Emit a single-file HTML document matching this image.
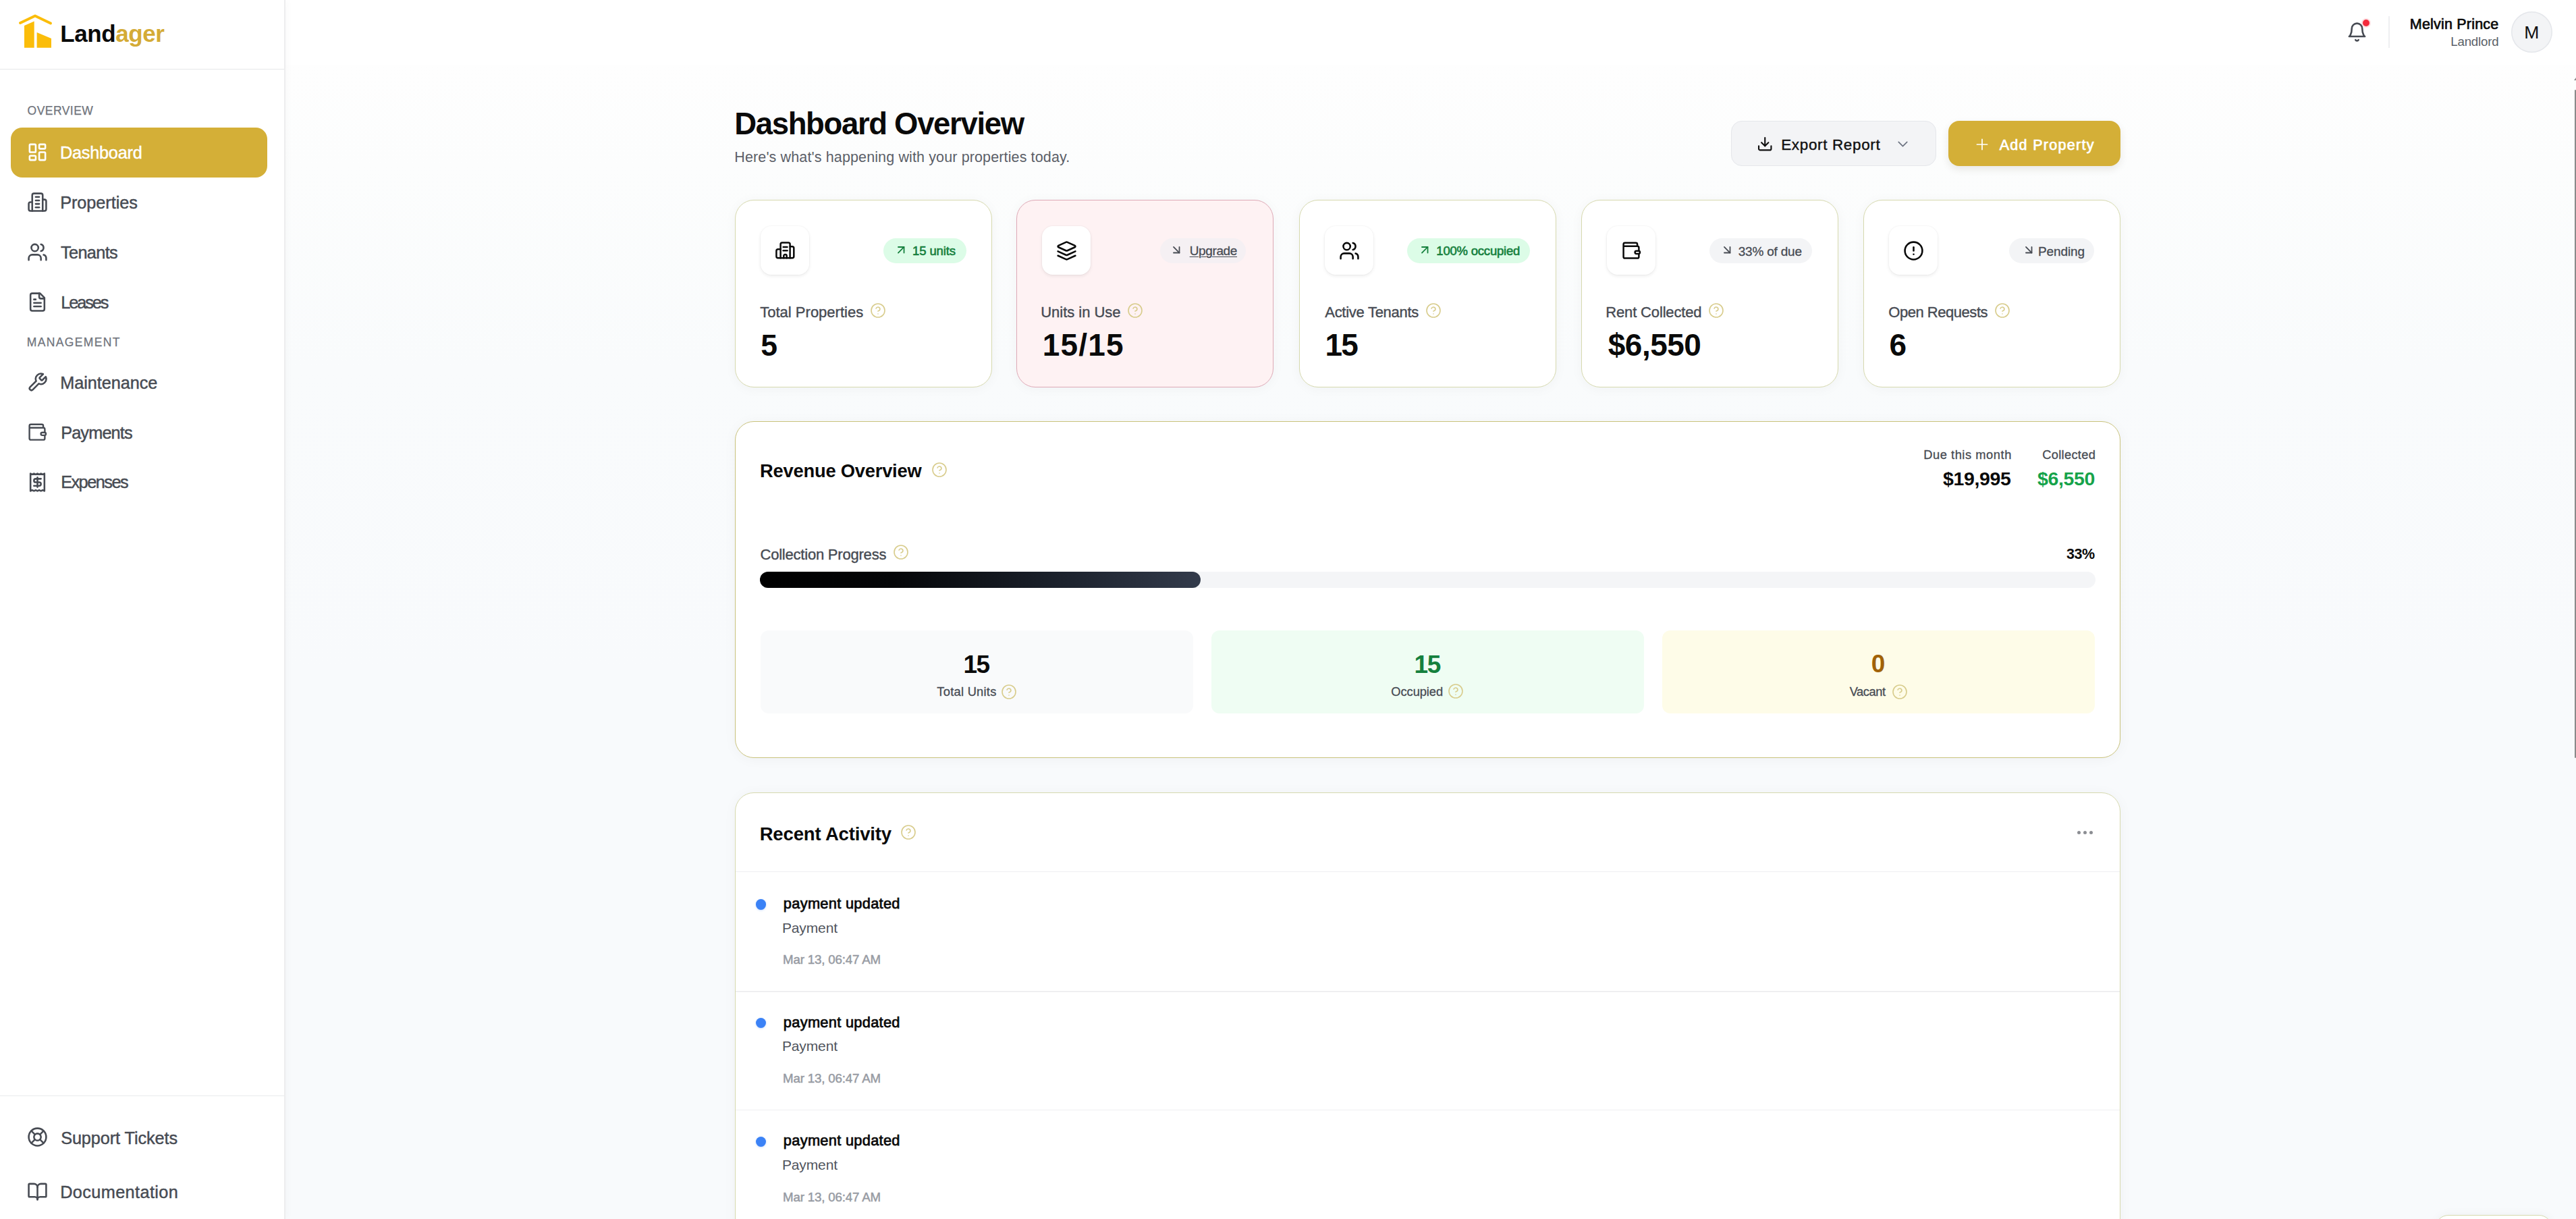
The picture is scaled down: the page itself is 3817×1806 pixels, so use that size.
<!DOCTYPE html>
<html><head><meta charset="utf-8"><title>Landager Dashboard</title>
<style>
html,body{margin:0;padding:0;width:3817px;height:1806px;overflow:hidden;}
body{position:relative;font-family:"Liberation Sans",sans-serif;background:#f9fafb;}
.t{position:absolute;white-space:nowrap;}
</style></head><body>
<div style="position:absolute;left:421px;top:96px;width:3396px;height:1710px;background:linear-gradient(180deg,#fefefe 0px,#fcfdfd 150px,#f9fbfc 450px,#f8fafc 900px,#f8fafc 1710px)"></div>
<div style="position:absolute;left:421px;top:0px;width:3396px;height:96px;background:#ffffff"></div>
<div style="position:absolute;left:0px;top:0px;width:421px;height:1806px;background:#ffffff;border-right:2px solid #ededee;box-shadow:3px 0 10px rgba(0,0,0,0.025)"></div>
<div style="position:absolute;left:0px;top:101.5px;width:421px;height:1px;background:#e6e7e9"></div>
<div style="position:absolute;left:0px;top:1623px;width:421px;height:1px;background:#e9eaec"></div>
<svg style="position:absolute;left:0;top:0" width="100" height="100" viewBox="0 0 100 100"><polyline points="30,34 52,23.5 75,34.5" fill="none" stroke="#fbbd0a" stroke-width="4" stroke-linecap="round" stroke-linejoin="round"/><path d="M36 38 L50.7 31.6 L50.7 70.7 L36 70.7 Z" fill="#fbbd0a"/><path d="M54.6 48 L76 57 L76 70.7 L54.6 70.7 Z" fill="#fbbd0a"/></svg>
<div class="t" style="top:32.37px;font-size:35px;line-height:35px;color:#0a0a0a;font-weight:700;letter-spacing:-0.427px;left:89.35px;">Land<span style="color:#d4ab36">ager</span></div>
<div class="t" style="top:156.19px;font-size:17.5px;line-height:17.5px;color:#70747c;-webkit-text-stroke:0.25px #70747c;letter-spacing:0.463px;left:40.58px;">OVERVIEW</div>
<div style="position:absolute;left:16px;top:189px;width:380px;height:74px;background:#d4af37;border-radius:17px"></div>
<svg style="position:absolute;left:39.5px;top:209.5px;" width="31" height="31" viewBox="0 0 24 24" fill="none" stroke="#ffffff" stroke-width="2" stroke-linecap="round" stroke-linejoin="round"><rect width="7" height="9" x="3" y="3" rx="1"/><rect width="7" height="5" x="14" y="3" rx="1"/><rect width="7" height="9" x="14" y="12" rx="1"/><rect width="7" height="5" x="3" y="16" rx="1"/></svg>
<div class="t" style="top:213.58px;font-size:25.3px;line-height:25.3px;color:#ffffff;-webkit-text-stroke:0.45px #ffffff;letter-spacing:-0.257px;left:89.03px;">Dashboard</div>
<svg style="position:absolute;left:39.5px;top:283.7px;" width="31" height="31" viewBox="0 0 24 24" fill="none" stroke="#474b53" stroke-width="2" stroke-linecap="round" stroke-linejoin="round"><path d="M6 22V4a2 2 0 0 1 2-2h8a2 2 0 0 1 2 2v18Z"/><path d="M6 12H4a2 2 0 0 0-2 2v6a2 2 0 0 0 2 2h2"/><path d="M18 9h2a2 2 0 0 1 2 2v9a2 2 0 0 1-2 2h-2"/><path d="M10 6h4"/><path d="M10 10h4"/><path d="M10 14h4"/><path d="M10 18h4"/></svg>
<div class="t" style="top:288.10px;font-size:25.3px;line-height:25.3px;color:#474b53;-webkit-text-stroke:0.45px #474b53;letter-spacing:-0.060px;left:89.13px;">Properties</div>
<svg style="position:absolute;left:39.5px;top:357.7px;" width="31" height="31" viewBox="0 0 24 24" fill="none" stroke="#474b53" stroke-width="2" stroke-linecap="round" stroke-linejoin="round"><path d="M16 21v-2a4 4 0 0 0-4-4H6a4 4 0 0 0-4 4v2"/><circle cx="9" cy="7" r="4"/><path d="M22 21v-2a4 4 0 0 0-3-3.87"/><path d="M16 3.13a4 4 0 0 1 0 7.75"/></svg>
<div class="t" style="top:362.10px;font-size:25.3px;line-height:25.3px;color:#474b53;-webkit-text-stroke:0.45px #474b53;letter-spacing:-0.630px;left:89.93px;">Tenants</div>
<svg style="position:absolute;left:39.5px;top:431.8px;" width="31" height="31" viewBox="0 0 24 24" fill="none" stroke="#474b53" stroke-width="2" stroke-linecap="round" stroke-linejoin="round"><path d="M15 2H6a2 2 0 0 0-2 2v16a2 2 0 0 0 2 2h12a2 2 0 0 0 2-2V7Z"/><path d="M14 2v4a2 2 0 0 0 2 2h4"/><path d="M10 9H8"/><path d="M16 13H8"/><path d="M16 17H8"/></svg>
<div class="t" style="top:436.36px;font-size:25.3px;line-height:25.3px;color:#474b53;-webkit-text-stroke:0.45px #474b53;letter-spacing:-2.052px;left:90.13px;">Leases</div>
<div class="t" style="top:498.75px;font-size:17.5px;line-height:17.5px;color:#70747c;-webkit-text-stroke:0.25px #70747c;letter-spacing:1.370px;left:39.77px;">MANAGEMENT</div>
<svg style="position:absolute;left:39.5px;top:551.1px;" width="31" height="31" viewBox="0 0 24 24" fill="none" stroke="#474b53" stroke-width="2" stroke-linecap="round" stroke-linejoin="round"><path d="M14.7 6.3a1 1 0 0 0 0 1.4l1.6 1.6a1 1 0 0 0 1.4 0l3.77-3.77a6 6 0 0 1-7.94 7.94l-6.91 6.91a2.12 2.12 0 0 1-3-3l6.91-6.91a6 6 0 0 1 7.94-7.94l-3.76 3.76z"/></svg>
<div class="t" style="top:555.34px;font-size:25.3px;line-height:25.3px;color:#474b53;-webkit-text-stroke:0.45px #474b53;letter-spacing:-0.054px;left:89.13px;">Maintenance</div>
<svg style="position:absolute;left:32.7px;top:619.0999999999999px" width="40" height="40" viewBox="0 0 40 40" fill="none" stroke="#474b53" stroke-width="2.4" stroke-linecap="round" stroke-linejoin="round"><path d="M31.1 14.8V11.9a2.2 2.2 0 0 0-2.2-2.2H12.8a2.2 2.2 0 0 0-2.2 2.2V30.4a2.2 2.2 0 0 0 2.2 2.2H31.2a2.2 2.2 0 0 0 2.2-2.2V17a2.2 2.2 0 0 0-2.2-2.2H10.6"/><rect x="27.6" y="21.7" width="7.4" height="4.2" rx="2.1" fill="#ffffff"/></svg>
<div class="t" style="top:629.36px;font-size:25.3px;line-height:25.3px;color:#474b53;-webkit-text-stroke:0.45px #474b53;letter-spacing:-0.849px;left:90.13px;">Payments</div>
<svg style="position:absolute;left:39.5px;top:698.7px;" width="31" height="31" viewBox="0 0 24 24" fill="none" stroke="#474b53" stroke-width="2" stroke-linecap="round" stroke-linejoin="round"><path d="M4 2v20l2-1 2 1 2-1 2 1 2-1 2 1 2-1 2 1V2l-2 1-2-1-2 1-2-1-2 1-2-1-2 1Z"/><path d="M16 8h-6a2 2 0 1 0 0 4h4a2 2 0 1 1 0 4H8"/><path d="M12 17.5v-11"/></svg>
<div class="t" style="top:702.30px;font-size:25.3px;line-height:25.3px;color:#474b53;-webkit-text-stroke:0.45px #474b53;letter-spacing:-1.519px;left:90.13px;">Expenses</div>
<svg style="position:absolute;left:39.5px;top:1669.4px;" width="31" height="31" viewBox="0 0 24 24" fill="none" stroke="#474b53" stroke-width="2" stroke-linecap="round" stroke-linejoin="round"><circle cx="12" cy="12" r="10"/><path d="m4.93 4.93 4.24 4.24"/><path d="m14.83 9.17 4.24-4.24"/><path d="m14.83 14.83 4.24 4.24"/><path d="m9.17 14.83-4.24 4.24"/><circle cx="12" cy="12" r="4"/></svg>
<div class="t" style="top:1674.12px;font-size:25.3px;line-height:25.3px;color:#474b53;-webkit-text-stroke:0.45px #474b53;letter-spacing:-0.099px;left:90.13px;">Support Tickets</div>
<svg style="position:absolute;left:39.5px;top:1749.5px;" width="31" height="31" viewBox="0 0 24 24" fill="none" stroke="#474b53" stroke-width="2" stroke-linecap="round" stroke-linejoin="round"><path d="M12 7v14"/><path d="M3 18a1 1 0 0 1-1-1V4a1 1 0 0 1 1-1h5a4 4 0 0 1 4 4 4 4 0 0 1 4-4h5a1 1 0 0 1 1 1v13a1 1 0 0 1-1 1h-6a3 3 0 0 0-3 3 3 3 0 0 0-3-3z"/></svg>
<div class="t" style="top:1753.58px;font-size:25.3px;line-height:25.3px;color:#474b53;-webkit-text-stroke:0.45px #474b53;letter-spacing:0.379px;left:89.13px;">Documentation</div>
<svg style="position:absolute;left:3477px;top:32px;" width="31" height="31" viewBox="0 0 24 24" fill="none" stroke="#474b53" stroke-width="2" stroke-linecap="round" stroke-linejoin="round"><path d="M6 8a6 6 0 0 1 12 0c0 7 3 9 3 9H3s3-2 3-9"/><path d="M10.3 21a1.94 1.94 0 0 0 3.4 0"/></svg>
<div style="position:absolute;left:3501.1px;top:28.5px;width:10px;height:10px;background:#f42a3c;border-radius:50%;box-shadow:0 0 0 2px rgba(244,42,60,0.15)"></div>
<div style="position:absolute;left:3539px;top:24px;width:1.5px;height:47px;background:#eeeff1"></div>
<div class="t" style="top:26.08px;font-size:21.5px;line-height:21.5px;color:#0a0a0a;-webkit-text-stroke:0.7px #0a0a0a;letter-spacing:0.200px;right:114.54px;">Melvin Prince</div>
<div class="t" style="top:53.11px;font-size:18.7px;line-height:18.7px;color:#5b5f68;letter-spacing:-0.165px;right:114.42px;">Landlord</div>
<div style="position:absolute;left:3721px;top:17px;width:61px;height:61px;background:#f3f4f6;border-radius:50%;box-shadow:inset 0 0 0 1.5px #e5e7eb"></div>
<div class="t" style="top:34.85px;font-size:26.5px;line-height:26.5px;color:#111111;left:3740.14px;">M</div>
<div style="position:absolute;left:3814.6px;top:133px;width:2.4px;height:990px;background:#8a8a8a;border-radius:1.2px"></div>
<svg style="position:absolute;left:3812px;top:113px" width="6" height="8" viewBox="0 0 6 8"><path d="M2 6 L5 2 L6 6 Z" fill="#8a8a8a"/></svg>
<div class="t" style="top:160.90px;font-size:45.5px;line-height:45.5px;color:#0a0a0a;font-weight:700;letter-spacing:-1.341px;left:1088.21px;">Dashboard Overview</div>
<div class="t" style="top:222.50px;font-size:21.5px;line-height:21.5px;color:#5b5f68;letter-spacing:0.126px;left:1088.29px;">Here's what's happening with your properties today.</div>
<div style="position:absolute;left:2565px;top:179px;width:304px;height:67px;background:#f3f4f6;border:1.5px solid #e5e7eb;border-radius:16px;box-sizing:border-box"></div>
<svg style="position:absolute;left:2603px;top:201px;" width="24.5" height="24.5" viewBox="0 0 24 24" fill="none" stroke="#111111" stroke-width="2.1" stroke-linecap="round" stroke-linejoin="round"><path d="M21 15v4a2 2 0 0 1-2 2H5a2 2 0 0 1-2-2v-4"/><polyline points="7 10 12 15 17 10"/><line x1="12" x2="12" y1="15" y2="3"/></svg>
<div class="t" style="top:203.95px;font-size:22.5px;line-height:22.5px;color:#111111;-webkit-text-stroke:0.4px #111111;letter-spacing:0.639px;left:2639.22px;">Export Report</div>
<svg style="position:absolute;left:2806.5px;top:201px;" width="25" height="25" viewBox="0 0 24 24" fill="none" stroke="#6b7280" stroke-width="1.6" stroke-linecap="round" stroke-linejoin="round"><path d="m6 9 6 6 6-6"/></svg>
<div style="position:absolute;left:2887px;top:179px;width:255px;height:67px;background:#d4af37;border-radius:16px;box-shadow:0 5px 12px rgba(60,50,20,0.10)"></div>
<svg style="position:absolute;left:2924px;top:201px;" width="26" height="26" viewBox="0 0 24 24" fill="none" stroke="#ffffff" stroke-width="1.6" stroke-linecap="round" stroke-linejoin="round"><path d="M5 12h14"/><path d="M12 5v14"/></svg>
<div class="t" style="top:204.80px;font-size:21.5px;line-height:21.5px;color:#ffffff;-webkit-text-stroke:0.75px #ffffff;letter-spacing:1.305px;left:2962.70px;">Add Property</div>
<div style="position:absolute;left:1089px;top:296px;width:381px;height:278px;background:#ffffff;border:1px solid #d6d9ae;border-radius:28px;box-sizing:border-box;box-shadow:0 2px 18px rgba(15,23,42,0.04)"></div>
<div style="position:absolute;left:1127px;top:335px;width:72px;height:72px;background:#ffffff;border-radius:16px;box-shadow:0 2px 5px rgba(0,0,0,0.08),0 0 0 1px rgba(0,0,0,0.02)"></div>
<svg style="position:absolute;left:1140px;top:350px" width="40" height="40" viewBox="0 0 40 40" fill="none" stroke="#0a0a0a" stroke-width="2.5" stroke-linecap="round" stroke-linejoin="round"><path d="M16.6 32.3V11.9a2.4 2.4 0 0 1 2.4-2.4h9.2a2.4 2.4 0 0 1 2.4 2.4V32.3"/><path d="M16.6 19.3H12.9a2.5 2.5 0 0 0-2.5 2.5V29.8a2.5 2.5 0 0 0 2.5 2.5H33.8a2.5 2.5 0 0 0 2.5-2.5V17.7a2.5 2.5 0 0 0-2.5-2.5H30.6"/><path d="M20.6 16.1h5.9"/><path d="M20.6 21.3h5.9"/><path d="M21.3 32.3V29.1a2.2 2.2 0 0 1 4.4 0V32.3"/></svg>
<div style="position:absolute;left:1309px;top:353px;width:122.5px;height:37px;background:#dcfce7;border-radius:19px"></div>
<svg style="position:absolute;left:1325.4px;top:360px;" width="20.5" height="20.5" viewBox="0 0 24 24" fill="none" stroke="#15803d" stroke-width="2.1" stroke-linecap="round" stroke-linejoin="round"><path d="M7 7h10v10"/><path d="M7 17 17 7"/></svg>
<div class="t" style="top:362.96px;font-size:18.5px;line-height:18.5px;color:#15803d;-webkit-text-stroke:0.6px #15803d;letter-spacing:-0.121px;left:1352.10px;">15 units</div>
<div class="t" style="top:451.56px;font-size:22px;line-height:22px;color:#474b53;-webkit-text-stroke:0.4px #474b53;letter-spacing:0.006px;left:1126.26px;">Total Properties</div>
<div class="t" style="top:490.37px;font-size:44.5px;line-height:44.5px;color:#0a0a0a;font-weight:700;left:1127.28px;">5</div>
<div style="position:absolute;left:1506px;top:296px;width:381px;height:278px;background:#fef2f3;border:1px solid #dea9b6;border-radius:28px;box-sizing:border-box;box-shadow:0 2px 18px rgba(15,23,42,0.04)"></div>
<div style="position:absolute;left:1544px;top:335px;width:72px;height:72px;background:#ffffff;border-radius:16px;box-shadow:0 2px 5px rgba(0,0,0,0.08),0 0 0 1px rgba(0,0,0,0.02)"></div>
<svg style="position:absolute;left:1564.5px;top:355.5px;" width="31" height="31" viewBox="0 0 24 24" fill="none" stroke="#0a0a0a" stroke-width="2" stroke-linecap="round" stroke-linejoin="round"><path d="M12.83 2.18a2 2 0 0 0-1.66 0L2.6 6.08a1 1 0 0 0 0 1.83l8.58 3.91a2 2 0 0 0 1.66 0l8.58-3.9a1 1 0 0 0 0-1.83Z"/><path d="m22 17.65-9.17 4.16a2 2 0 0 1-1.66 0L2 17.65"/><path d="m22 12.65-9.17 4.16a2 2 0 0 1-1.66 0L2 12.65"/></svg>
<div style="position:absolute;left:1719px;top:353px;width:127px;height:37px;background:rgba(238,239,243,0.6);border-radius:19px"></div>
<svg style="position:absolute;left:1733px;top:360px;" width="20.5" height="20.5" viewBox="0 0 24 24" fill="none" stroke="#474b53" stroke-width="2.1" stroke-linecap="round" stroke-linejoin="round"><path d="m7 7 10 10"/><path d="M17 7v10H7"/></svg>
<div class="t" style="top:361.62px;font-size:19px;line-height:19px;color:#474b53;-webkit-text-stroke:0.3px #474b53;letter-spacing:-0.360px;left:1762.67px;text-decoration:underline;text-underline-offset:1.5px;text-decoration-thickness:1.3px;">Upgrade</div>
<div class="t" style="top:451.56px;font-size:22px;line-height:22px;color:#474b53;-webkit-text-stroke:0.4px #474b53;letter-spacing:-0.027px;left:1542.26px;">Units in Use</div>
<div class="t" style="top:488.30px;font-size:46px;line-height:46px;color:#0a0a0a;font-weight:700;letter-spacing:1.170px;left:1544.78px;">15/15</div>
<div style="position:absolute;left:1925px;top:296px;width:381px;height:278px;background:#ffffff;border:1px solid #d6d9ae;border-radius:28px;box-sizing:border-box;box-shadow:0 2px 18px rgba(15,23,42,0.04)"></div>
<div style="position:absolute;left:1963px;top:335px;width:72px;height:72px;background:#ffffff;border-radius:16px;box-shadow:0 2px 5px rgba(0,0,0,0.08),0 0 0 1px rgba(0,0,0,0.02)"></div>
<svg style="position:absolute;left:1983.5px;top:355.5px;" width="31" height="31" viewBox="0 0 24 24" fill="none" stroke="#0a0a0a" stroke-width="2" stroke-linecap="round" stroke-linejoin="round"><path d="M16 21v-2a4 4 0 0 0-4-4H6a4 4 0 0 0-4 4v2"/><circle cx="9" cy="7" r="4"/><path d="M22 21v-2a4 4 0 0 0-3-3.87"/><path d="M16 3.13a4 4 0 0 1 0 7.75"/></svg>
<div style="position:absolute;left:2084.7px;top:353px;width:182.60000000000036px;height:37px;background:#dcfce7;border-radius:19px"></div>
<svg style="position:absolute;left:2101px;top:360px;" width="20.5" height="20.5" viewBox="0 0 24 24" fill="none" stroke="#15803d" stroke-width="2.1" stroke-linecap="round" stroke-linejoin="round"><path d="M7 7h10v10"/><path d="M7 17 17 7"/></svg>
<div class="t" style="top:362.96px;font-size:18.5px;line-height:18.5px;color:#15803d;-webkit-text-stroke:0.6px #15803d;letter-spacing:-0.205px;left:2128.30px;">100% occupied</div>
<div class="t" style="top:451.56px;font-size:22px;line-height:22px;color:#474b53;-webkit-text-stroke:0.4px #474b53;letter-spacing:-0.277px;left:1963.26px;">Active Tenants</div>
<div class="t" style="top:488.30px;font-size:46px;line-height:46px;color:#0a0a0a;font-weight:700;letter-spacing:-1.980px;left:1963.58px;">15</div>
<div style="position:absolute;left:2343px;top:296px;width:381px;height:278px;background:#ffffff;border:1px solid #d6d9ae;border-radius:28px;box-sizing:border-box;box-shadow:0 2px 18px rgba(15,23,42,0.04)"></div>
<div style="position:absolute;left:2381px;top:335px;width:72px;height:72px;background:#ffffff;border-radius:16px;box-shadow:0 2px 5px rgba(0,0,0,0.08),0 0 0 1px rgba(0,0,0,0.02)"></div>
<svg style="position:absolute;left:2395px;top:350px" width="40" height="40" viewBox="0 0 40 40" fill="none" stroke="#0a0a0a" stroke-width="2.5" stroke-linecap="round" stroke-linejoin="round"><path d="M31.1 14.8V11.9a2.2 2.2 0 0 0-2.2-2.2H12.8a2.2 2.2 0 0 0-2.2 2.2V30.4a2.2 2.2 0 0 0 2.2 2.2H31.2a2.2 2.2 0 0 0 2.2-2.2V17a2.2 2.2 0 0 0-2.2-2.2H10.6"/><rect x="27.6" y="21.7" width="7.4" height="4.2" rx="2.1" fill="#ffffff"/></svg>
<div style="position:absolute;left:2533px;top:353px;width:151.5999999999999px;height:37px;background:#f3f4f6;border-radius:19px"></div>
<svg style="position:absolute;left:2548.5px;top:360px;" width="20.5" height="20.5" viewBox="0 0 24 24" fill="none" stroke="#474b53" stroke-width="2.1" stroke-linecap="round" stroke-linejoin="round"><path d="m7 7 10 10"/><path d="M17 7v10H7"/></svg>
<div class="t" style="top:362.54px;font-size:19px;line-height:19px;color:#474b53;-webkit-text-stroke:0.3px #474b53;letter-spacing:-0.200px;left:2575.67px;">33% of due</div>
<div class="t" style="top:451.56px;font-size:22px;line-height:22px;color:#474b53;-webkit-text-stroke:0.4px #474b53;letter-spacing:-0.152px;left:2379.26px;">Rent Collected</div>
<div class="t" style="top:488.30px;font-size:46px;line-height:46px;color:#0a0a0a;font-weight:700;letter-spacing:-0.522px;left:2382.78px;">$6,550</div>
<div style="position:absolute;left:2761px;top:296px;width:381px;height:278px;background:#ffffff;border:1px solid #d6d9ae;border-radius:28px;box-sizing:border-box;box-shadow:0 2px 18px rgba(15,23,42,0.04)"></div>
<div style="position:absolute;left:2799px;top:335px;width:72px;height:72px;background:#ffffff;border-radius:16px;box-shadow:0 2px 5px rgba(0,0,0,0.08),0 0 0 1px rgba(0,0,0,0.02)"></div>
<svg style="position:absolute;left:2819.5px;top:355.5px;" width="31" height="31" viewBox="0 0 24 24" fill="none" stroke="#0a0a0a" stroke-width="2" stroke-linecap="round" stroke-linejoin="round"><circle cx="12" cy="12" r="10"/><line x1="12" x2="12" y1="8" y2="12"/><line x1="12" x2="12.01" y1="16" y2="16"/></svg>
<div style="position:absolute;left:2976.8px;top:353px;width:126.19999999999982px;height:37px;background:#f3f4f6;border-radius:19px"></div>
<svg style="position:absolute;left:2996px;top:360px;" width="20.5" height="20.5" viewBox="0 0 24 24" fill="none" stroke="#474b53" stroke-width="2.1" stroke-linecap="round" stroke-linejoin="round"><path d="m7 7 10 10"/><path d="M17 7v10H7"/></svg>
<div class="t" style="top:362.54px;font-size:19px;line-height:19px;color:#474b53;-webkit-text-stroke:0.3px #474b53;letter-spacing:-0.135px;left:3020.07px;">Pending</div>
<div class="t" style="top:451.56px;font-size:22px;line-height:22px;color:#474b53;-webkit-text-stroke:0.4px #474b53;letter-spacing:-0.465px;left:2798.26px;">Open Requests</div>
<div class="t" style="top:488.30px;font-size:46px;line-height:46px;color:#0a0a0a;font-weight:700;left:2799.38px;">6</div>
<div style="position:absolute;left:1089px;top:624px;width:2053px;height:499px;background:#ffffff;border:1px solid #c9c27c;border-radius:28px;box-sizing:border-box;box-shadow:0 2px 20px rgba(15,23,42,0.04)"></div>
<div class="t" style="top:684.27px;font-size:27.3px;line-height:27.3px;color:#0a0a0a;font-weight:700;letter-spacing:-0.210px;left:1126.09px;">Revenue Overview</div>
<div class="t" style="top:665.41px;font-size:18.3px;line-height:18.3px;color:#474b53;-webkit-text-stroke:0.3px #474b53;letter-spacing:0.554px;right:836.11px;">Due this month</div>
<div class="t" style="top:665.41px;font-size:18.3px;line-height:18.3px;color:#474b53;-webkit-text-stroke:0.3px #474b53;letter-spacing:0.322px;right:711.75px;">Collected</div>
<div class="t" style="top:695.25px;font-size:28.5px;line-height:28.5px;color:#0a0a0a;font-weight:700;letter-spacing:-0.345px;right:837.41px;">$19,995</div>
<div class="t" style="top:695.25px;font-size:28.5px;line-height:28.5px;color:#16a34a;font-weight:700;letter-spacing:-0.342px;right:713.00px;">$6,550</div>
<div class="t" style="top:810.94px;font-size:22px;line-height:22px;color:#474b53;-webkit-text-stroke:0.4px #474b53;letter-spacing:-0.210px;left:1126.46px;">Collection Progress</div>
<div class="t" style="top:811.02px;font-size:21.5px;line-height:21.5px;color:#0a0a0a;font-weight:700;letter-spacing:-0.450px;right:713.39px;">33%</div>
<div style="position:absolute;left:1126px;top:847px;width:1979px;height:23.8px;background:#f4f5f7;border-radius:12px"></div>
<div style="position:absolute;left:1126px;top:847px;width:653px;height:23.8px;background:linear-gradient(90deg,#000000 0%,#050608 30%,#1d232e 70%,#333b4b 100%);border-radius:12px"></div>
<div style="position:absolute;left:1127px;top:934px;width:641px;height:123px;background:#f9fafb;border-radius:12px"></div>
<div style="position:absolute;left:1795px;top:934px;width:641px;height:123px;background:#effdf3;border-radius:12px"></div>
<div style="position:absolute;left:2463px;top:934px;width:641px;height:123px;background:#fefce8;border-radius:12px"></div>
<div class="t" style="top:965.82px;font-size:37px;line-height:37px;color:#0a0a0a;font-weight:700;letter-spacing:-1.530px;left:1427.41px;">15</div>
<div class="t" style="top:1016.27px;font-size:18.3px;line-height:18.3px;color:#474b53;-webkit-text-stroke:0.3px #474b53;letter-spacing:0.270px;left:1388.32px;">Total Units</div>
<div class="t" style="top:965.82px;font-size:37px;line-height:37px;color:#15803d;font-weight:700;letter-spacing:-1.530px;left:2095.61px;">15</div>
<div class="t" style="top:1016.27px;font-size:18.3px;line-height:18.3px;color:#474b53;-webkit-text-stroke:0.3px #474b53;letter-spacing:-0.057px;left:2061.32px;">Occupied</div>
<div class="t" style="top:965.20px;font-size:37px;line-height:37px;color:#a16207;font-weight:700;left:2772.81px;">0</div>
<div class="t" style="top:1016.27px;font-size:18.3px;line-height:18.3px;color:#474b53;-webkit-text-stroke:0.3px #474b53;letter-spacing:-0.432px;left:2740.72px;">Vacant</div>
<div style="position:absolute;left:1089px;top:1174px;width:2053px;height:800px;background:#ffffff;border:1px solid #d6d9ae;border-radius:28px;box-sizing:border-box;box-shadow:0 2px 20px rgba(15,23,42,0.04)"></div>
<div class="t" style="top:1221.62px;font-size:27.5px;line-height:27.5px;color:#0a0a0a;font-weight:700;letter-spacing:-0.159px;left:1125.68px;">Recent Activity</div>
<div style="position:absolute;left:3077.9px;top:1230.9px;width:5px;height:5px;background:#8c8e93;border-radius:50%"></div>
<div style="position:absolute;left:3086.9500000000003px;top:1230.9px;width:5px;height:5px;background:#8c8e93;border-radius:50%"></div>
<div style="position:absolute;left:3096.0px;top:1230.9px;width:5px;height:5px;background:#8c8e93;border-radius:50%"></div>
<div style="position:absolute;left:1090px;top:1290.5px;width:2051px;height:1.5px;background:#efeff1"></div>
<div style="position:absolute;left:1119.7px;top:1332.2px;width:15.6px;height:15.6px;background:#3b82f6;border-radius:50%;box-shadow:0 1px 3px rgba(59,130,246,0.25)"></div>
<div class="t" style="top:1327.89px;font-size:21.8px;line-height:21.8px;color:#0a0a0a;-webkit-text-stroke:0.75px #0a0a0a;letter-spacing:0.295px;left:1160.87px;">payment updated</div>
<div class="t" style="top:1363.60px;font-size:21px;line-height:21px;color:#50545c;letter-spacing:-0.120px;left:1158.93px;">Payment</div>
<div class="t" style="top:1413.49px;font-size:18.7px;line-height:18.7px;color:#979ba3;-webkit-text-stroke:0.5px #979ba3;letter-spacing:-0.168px;left:1160.09px;">Mar 13, 06:47 AM</div>
<div style="position:absolute;left:1090px;top:1468.0px;width:2051px;height:1.5px;background:#efeff1"></div>
<div style="position:absolute;left:1119.7px;top:1507.9px;width:15.6px;height:15.6px;background:#3b82f6;border-radius:50%;box-shadow:0 1px 3px rgba(59,130,246,0.25)"></div>
<div class="t" style="top:1503.59px;font-size:21.8px;line-height:21.8px;color:#0a0a0a;-webkit-text-stroke:0.75px #0a0a0a;letter-spacing:0.295px;left:1160.87px;">payment updated</div>
<div class="t" style="top:1539.30px;font-size:21px;line-height:21px;color:#50545c;letter-spacing:-0.120px;left:1158.93px;">Payment</div>
<div class="t" style="top:1589.19px;font-size:18.7px;line-height:18.7px;color:#979ba3;-webkit-text-stroke:0.5px #979ba3;letter-spacing:-0.168px;left:1160.09px;">Mar 13, 06:47 AM</div>
<div style="position:absolute;left:1090px;top:1643.7px;width:2051px;height:1.5px;background:#efeff1"></div>
<div style="position:absolute;left:1119.7px;top:1683.6px;width:15.6px;height:15.6px;background:#3b82f6;border-radius:50%;box-shadow:0 1px 3px rgba(59,130,246,0.25)"></div>
<div class="t" style="top:1679.29px;font-size:21.8px;line-height:21.8px;color:#0a0a0a;-webkit-text-stroke:0.75px #0a0a0a;letter-spacing:0.295px;left:1160.87px;">payment updated</div>
<div class="t" style="top:1715.00px;font-size:21px;line-height:21px;color:#50545c;letter-spacing:-0.120px;left:1158.93px;">Payment</div>
<div class="t" style="top:1764.89px;font-size:18.7px;line-height:18.7px;color:#979ba3;-webkit-text-stroke:0.5px #979ba3;letter-spacing:-0.168px;left:1160.09px;">Mar 13, 06:47 AM</div>
<div style="position:absolute;left:3607.5px;top:1799.5px;width:174px;height:40px;background:#ffffff;border:1px solid #d6d9ae;border-radius:20px;box-sizing:border-box;box-shadow:0 -2px 14px rgba(0,0,0,0.035)"></div>
<svg style="position:absolute;left:1289.3px;top:447.8px;" width="24" height="24" viewBox="0 0 24 24" fill="none" stroke="#d8cc8c" stroke-width="1.6" stroke-linecap="round" stroke-linejoin="round"><circle cx="12" cy="12" r="10"/><path d="M9.09 9a3 3 0 0 1 5.83 1c0 2-3 3-3 3"/><path d="M12 17h.01"/></svg>
<svg style="position:absolute;left:1669.8px;top:447.8px;" width="24" height="24" viewBox="0 0 24 24" fill="none" stroke="#d8cc8c" stroke-width="1.6" stroke-linecap="round" stroke-linejoin="round"><circle cx="12" cy="12" r="10"/><path d="M9.09 9a3 3 0 0 1 5.83 1c0 2-3 3-3 3"/><path d="M12 17h.01"/></svg>
<svg style="position:absolute;left:2112.3px;top:447.8px;" width="24" height="24" viewBox="0 0 24 24" fill="none" stroke="#d8cc8c" stroke-width="1.6" stroke-linecap="round" stroke-linejoin="round"><circle cx="12" cy="12" r="10"/><path d="M9.09 9a3 3 0 0 1 5.83 1c0 2-3 3-3 3"/><path d="M12 17h.01"/></svg>
<svg style="position:absolute;left:2531px;top:447.8px;" width="24" height="24" viewBox="0 0 24 24" fill="none" stroke="#d8cc8c" stroke-width="1.6" stroke-linecap="round" stroke-linejoin="round"><circle cx="12" cy="12" r="10"/><path d="M9.09 9a3 3 0 0 1 5.83 1c0 2-3 3-3 3"/><path d="M12 17h.01"/></svg>
<svg style="position:absolute;left:2955px;top:447.8px;" width="24" height="24" viewBox="0 0 24 24" fill="none" stroke="#d8cc8c" stroke-width="1.6" stroke-linecap="round" stroke-linejoin="round"><circle cx="12" cy="12" r="10"/><path d="M9.09 9a3 3 0 0 1 5.83 1c0 2-3 3-3 3"/><path d="M12 17h.01"/></svg>
<svg style="position:absolute;left:1379.5px;top:683.5px;" width="24" height="24" viewBox="0 0 24 24" fill="none" stroke="#d8cc8c" stroke-width="1.6" stroke-linecap="round" stroke-linejoin="round"><circle cx="12" cy="12" r="10"/><path d="M9.09 9a3 3 0 0 1 5.83 1c0 2-3 3-3 3"/><path d="M12 17h.01"/></svg>
<svg style="position:absolute;left:1322.7px;top:806.4px;" width="24" height="24" viewBox="0 0 24 24" fill="none" stroke="#d8cc8c" stroke-width="1.6" stroke-linecap="round" stroke-linejoin="round"><circle cx="12" cy="12" r="10"/><path d="M9.09 9a3 3 0 0 1 5.83 1c0 2-3 3-3 3"/><path d="M12 17h.01"/></svg>
<svg style="position:absolute;left:1483px;top:1012.7px;" width="24" height="24" viewBox="0 0 24 24" fill="none" stroke="#d8cc8c" stroke-width="1.6" stroke-linecap="round" stroke-linejoin="round"><circle cx="12" cy="12" r="10"/><path d="M9.09 9a3 3 0 0 1 5.83 1c0 2-3 3-3 3"/><path d="M12 17h.01"/></svg>
<svg style="position:absolute;left:2145.2px;top:1012.4px;" width="24" height="24" viewBox="0 0 24 24" fill="none" stroke="#d8cc8c" stroke-width="1.6" stroke-linecap="round" stroke-linejoin="round"><circle cx="12" cy="12" r="10"/><path d="M9.09 9a3 3 0 0 1 5.83 1c0 2-3 3-3 3"/><path d="M12 17h.01"/></svg>
<svg style="position:absolute;left:2802.7px;top:1012.7px;" width="24" height="24" viewBox="0 0 24 24" fill="none" stroke="#d8cc8c" stroke-width="1.6" stroke-linecap="round" stroke-linejoin="round"><circle cx="12" cy="12" r="10"/><path d="M9.09 9a3 3 0 0 1 5.83 1c0 2-3 3-3 3"/><path d="M12 17h.01"/></svg>
<svg style="position:absolute;left:1334.1px;top:1220.5px;" width="24" height="24" viewBox="0 0 24 24" fill="none" stroke="#d8cc8c" stroke-width="1.6" stroke-linecap="round" stroke-linejoin="round"><circle cx="12" cy="12" r="10"/><path d="M9.09 9a3 3 0 0 1 5.83 1c0 2-3 3-3 3"/><path d="M12 17h.01"/></svg>
</body></html>
